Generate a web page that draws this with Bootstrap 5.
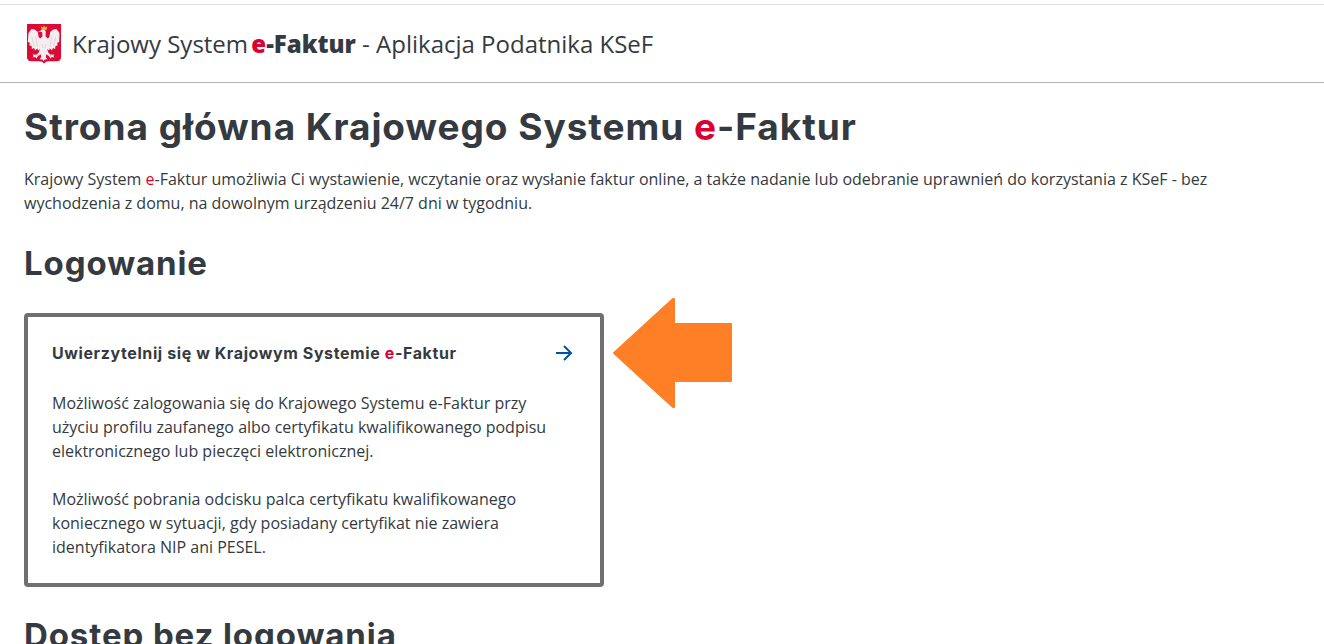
<!DOCTYPE html>
<html lang="pl">
<head>
<meta charset="utf-8">
<meta name="viewport" content="width=device-width, initial-scale=1">
<title>Krajowy System e-Faktur</title>
<link href="https://cdn.jsdelivr.net/npm/bootstrap@5.3.0/dist/css/bootstrap.min.css" rel="stylesheet">
<style>
  body { font-family: "Open Sans", "Noto Sans", sans-serif; font-size: 16px; line-height: 24px; color: #343a40; overflow: hidden; height: 644px; }
  .topline { height: 5px; border-bottom: 1px solid #e0e0e0; }
  .site-header { height: 78px; border-bottom: 1px solid #b5b5b5; padding: 0 24px 0 27px; }
  .brand-text { font-size: 24px; line-height: 36px; margin-left: 11px; white-space: pre; }
  .brand-text strong { font-weight: 800; margin-left: -3px; }
  .accent { color: #dc0032; }
  h1, h2, .tile-title { font-family: Inter, sans-serif; font-weight: 700; white-space: nowrap; margin: 0; }
  h1 { font-size: 37px; line-height: 48px; letter-spacing: .97px; }
  h2 { font-size: 33px; line-height: 40px; letter-spacing: .9px; }
  .intro { margin: 16px 0 28px; width: 1200px; }
  .tile-row { margin-top: 30px; margin-bottom: 28px; }
  .tile { width: 580px; height: 274px; border: 4px solid #707070; border-radius: 4px; padding: 24px; }
  .tile-head { margin-bottom: 26px; }
  .tile-title { font-size: 16px; line-height: 24px; letter-spacing: .6px; }
  .tile p { white-space: nowrap; margin: 0 0 24px; }
  .pointer { margin: -16px 0 0 8px; }
</style>
</head>
<body>
<div class="topline"></div>
<header class="site-header d-flex align-items-center">
  <svg width="34" height="40" viewBox="0 0 34 40" aria-hidden="true">
    <path fill="#dc0a35" d="M0 0h34v33q0 4-4 4.300h-8q-3.500 0-5 2.200q-1.500-2.200-5-2.200H4q-4-.3-4-4.300z"/>
    <path fill="#f4eef1" d="M15 5.500L12.500 7.500l2.700.8.300 4-2.300 2.200-1.600-1.500-.8-5-3-2.500L4.500 5 1.500 9 .8 18l2 .8-.4 2.700 2.200.4.300 3 2.300-.8.8 2.500 2.300-2 .8 2 1.700-1.700-1 3.600-2.500 2.300-3.800-.4 1.200 1.600-1.200 1.600 2.800-.7 1.300 1.700 1.200-2.400 3-1.900.4 3-1.600 2 2.900.3 1 2 1-2 2.900-.3-1.600-2 .4-3 3 1.900 1.200 2.400 1.300-1.700 2.800.7-1.200-1.600 1.200-1.600-3.800.4-2.500-2.300-1-3.600 1.700 1.700.8-2 2.300 2 .8-2.500 2.300.8.300-3 2.200-.4-.4-2.700 2-.8L32.500 9l-3-4-3.300.5-3 2.500-.8 5-1.600 1.500-2.300-2.200.3-4.300q-.3-2.500-2.500-2.700z"/>
    <path d="M5 13l2 9M8.500 12l2 11M28.500 13l-2 9M25 12l-2 11M15 20l1 4M19 20l-1 4" stroke="#dec5cf" stroke-width=".7" fill="none"/>
    <path fill="#edb63c" d="M13.800 2.300l2 1.200 1.300-2 1.300 2 2-1.200-.8 3.500h-5z"/>
    <path d="M11.500 7.700l2-.3M9.500 31l1.500 1M23 32l1.500-1" stroke="#dfb35a" stroke-width="1"/>
  </svg>
  <div class="brand-text">Krajowy System <strong><span class="accent">e</span>-Faktur</strong> - Aplikacja Podatnika KSeF</div>
</header>
<main class="px-4 pt-3">
  <h1 class="pt-1">Strona główna Krajowego Systemu <span class="accent">e</span>-Faktur</h1>
  <p class="intro">Krajowy System <span class="accent">e</span>-Faktur umożliwia Ci wystawienie, wczytanie oraz wysłanie faktur online, a także nadanie lub odebranie uprawnień do korzystania z KSeF - bez wychodzenia z domu, na dowolnym urządzeniu 24/7 dni w tygodniu.</p>
  <h2>Logowanie</h2>
  <div class="tile-row d-flex align-items-start">
    <section class="tile">
      <div class="tile-head d-flex justify-content-between align-items-center">
        <h3 class="tile-title">Uwierzytelnij się w Krajowym Systemie <span class="accent">e</span>-Faktur</h3>
        <svg width="24" height="24" viewBox="0 0 24 24" fill="none" stroke="#0052a5" stroke-width="2" aria-hidden="true"><path d="M4 12h15M12 5l7 7-7 7"/></svg>
      </div>
      <p>Możliwość zalogowania się do Krajowego Systemu e-Faktur przy<br>użyciu profilu zaufanego albo certyfikatu kwalifikowanego podpisu<br>elektronicznego lub pieczęci elektronicznej.</p>
      <p>Możliwość pobrania odcisku palca certyfikatu kwalifikowanego<br>koniecznego w sytuacji, gdy posiadany certyfikat nie zawiera<br>identyfikatora NIP ani PESEL.</p>
    </section>
    <svg class="pointer" width="121" height="112" viewBox="0 0 121 112" aria-hidden="true"><path d="M2 56L61 2h1v25h57v57H62v26h-1z" fill="#ff7f27" stroke="#ff7f27" stroke-width="2" stroke-linejoin="round"/></svg>
  </div>
  <h2>Dostęp bez logowania</h2>
</main>
<script src="https://cdn.jsdelivr.net/npm/bootstrap@5.3.0/dist/js/bootstrap.bundle.min.js"></script>
</body>
</html>
